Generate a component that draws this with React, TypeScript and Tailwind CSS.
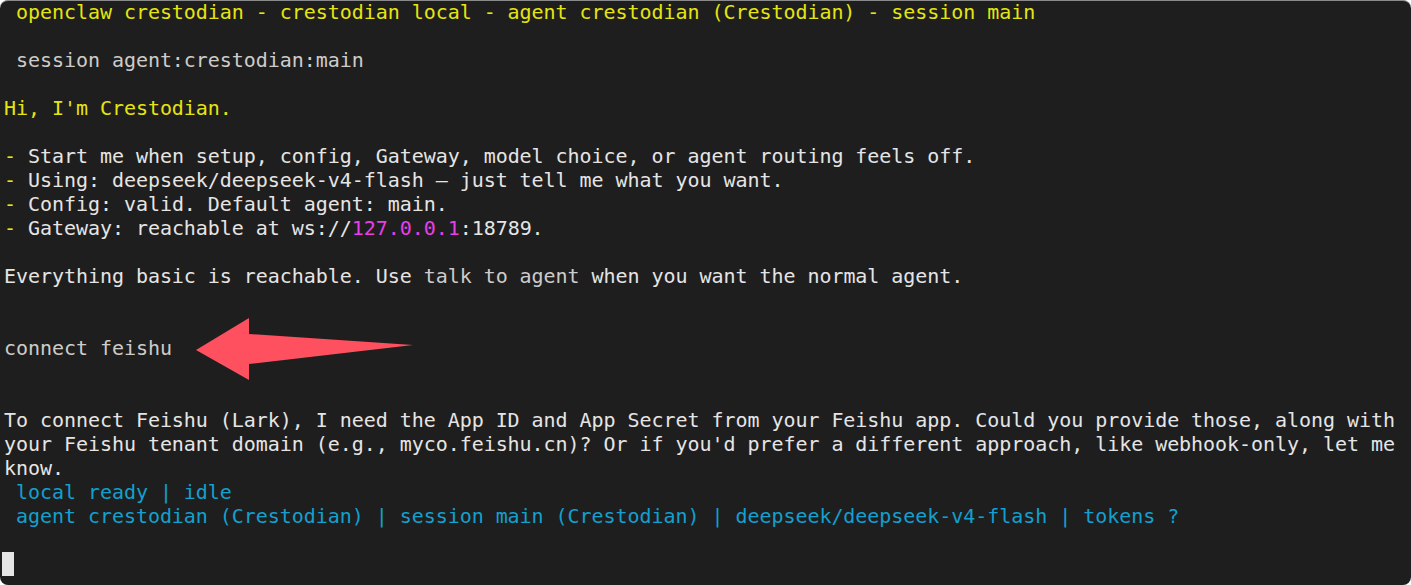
import React from "react";

const Y = "text-[#e5e510]";
const W = "text-[#e5e5e5]";
const G = "text-[#cccccc]";
const B = "text-[#11a0d0]";
const M = "text-[#e83ee8]";

function Line({ children }: { children?: React.ReactNode }) {
  return <div className="h-6 whitespace-pre">{children ?? " "}</div>;
}

export default function App() {
  return (
    <div className="h-[585px] w-[1411px] bg-white">
      <div
        className="relative h-full w-full overflow-hidden rounded-lg border-t border-[#8a8a8a] bg-[#1e1e1e] pl-1 text-[20px] leading-6 tracking-[-0.05px]"
        style={{ fontFamily: '"DejaVu Sans Mono", "Liberation Mono", monospace' }}
      >
        <div className="-mt-px">
          <Line><span className={Y}> openclaw crestodian - crestodian local - agent crestodian (Crestodian) - session main</span></Line>
          <Line />
          <Line><span className={G}> session agent:crestodian:main</span></Line>
          <Line />
          <Line><span className={Y}>Hi, I'm Crestodian.</span></Line>
          <Line />
          <Line><span className={Y}>- </span><span className={W}>Start me when setup, config, Gateway, model choice, or agent routing feels off.</span></Line>
          <Line><span className={Y}>- </span><span className={W}>Using: deepseek/deepseek-v4-flash — just tell me what you want.</span></Line>
          <Line><span className={Y}>- </span><span className={W}>Config: valid. Default agent: main.</span></Line>
          <Line>
            <span className={Y}>- </span>
            <span className={W}>Gateway: reachable at ws://</span>
            <span className={M}>127.0.0.1</span>
            <span className={W}>:18789.</span>
          </Line>
          <Line />
          <Line>
            <span className={W}>Everything basic is reachable. Use </span>
            <span className={G}>talk to agent</span>
            <span className={W}> when you want the normal agent.</span>
          </Line>
          <Line />
          <Line />
          <Line><span className={G}>connect feishu</span></Line>
          <Line />
          <Line />
          <Line><span className={W}>To connect Feishu (Lark), I need the App ID and App Secret from your Feishu app. Could you provide those, along with</span></Line>
          <Line><span className={W}>your Feishu tenant domain (e.g., myco.feishu.cn)? Or if you'd prefer a different approach, like webhook-only, let me</span></Line>
          <Line><span className={W}>know.</span></Line>
          <Line><span className={B}> local ready | idle</span></Line>
          <Line><span className={B}> agent crestodian (Crestodian) | session main (Crestodian) | deepseek/deepseek-v4-flash | tokens ?</span></Line>
          <Line />
          <div className="h-6">
            <div className="ml-[-2px] h-6 w-3 bg-[#e5e5e5]" />
          </div>
        </div>

        <svg
          className="absolute left-[190px] top-[310px]"
          width="230"
          height="76"
          viewBox="190 310 230 76"
        >
          <polygon
            points="196,349 249,317 249,333 413,344 249,363 249,379"
            fill="#ff5060"
          />
        </svg>
      </div>
    </div>
  );
}
